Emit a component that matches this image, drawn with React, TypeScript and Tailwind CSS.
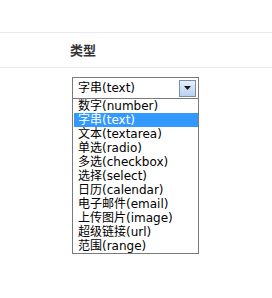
const options = [
  '数字(number)',
  '字串(text)',
  '文本(textarea)',
  '单选(radio)',
  '多选(checkbox)',
  '选择(select)',
  '日历(calendar)',
  '电子邮件(email)',
  '上传图片(image)',
  '超级链接(url)',
  '范围(range)',
]

export default function App() {
  const selected = 1

  return (
    <div className="w-[272px] h-[298px] bg-white overflow-hidden font-['DejaVu_Sans','Noto_Sans_CJK_SC',sans-serif]">
      <div className="h-[32px]" />

      {/* header row */}
      <div className="h-[36px] border-t border-b border-[#ebebeb] flex items-center pl-[70px]">
        <span className="text-[13px] font-bold text-[#333] font-['Noto_Sans_CJK_SC',sans-serif]">类型</span>
      </div>

      {/* select with open list */}
      <div className="pl-[72px] pt-[9px]">
        <div className="w-[127px] h-[22px] border border-[#7a7a7a] bg-white flex items-center justify-between pl-[5px] pr-[2px]">
          <span className="text-[12px] leading-none text-black">字串(text)</span>
          <div className="w-[17px] h-[17px] border border-[#7c8ea5] bg-gradient-to-b from-[#e6f0fb] to-[#b9d1ee] flex items-center justify-center">
            <svg width="7" height="4" viewBox="0 0 7 4">
              <path d="M0 0h7L3.5 4z" fill="#1a1a1a" />
            </svg>
          </div>
        </div>
        <div className="w-[127px] border border-[#7a7a7a] border-t-0 bg-white pl-px">
          {options.map((o, i) => (
            <div
              key={o}
              className={
                'h-[14px] text-[12px] leading-[14px] pl-[4px] whitespace-nowrap ' +
                (i === selected ? 'bg-[#3399ff] text-white' : 'text-black')
              }
            >
              {o}
            </div>
          ))}
        </div>
      </div>
    </div>
  )
}
